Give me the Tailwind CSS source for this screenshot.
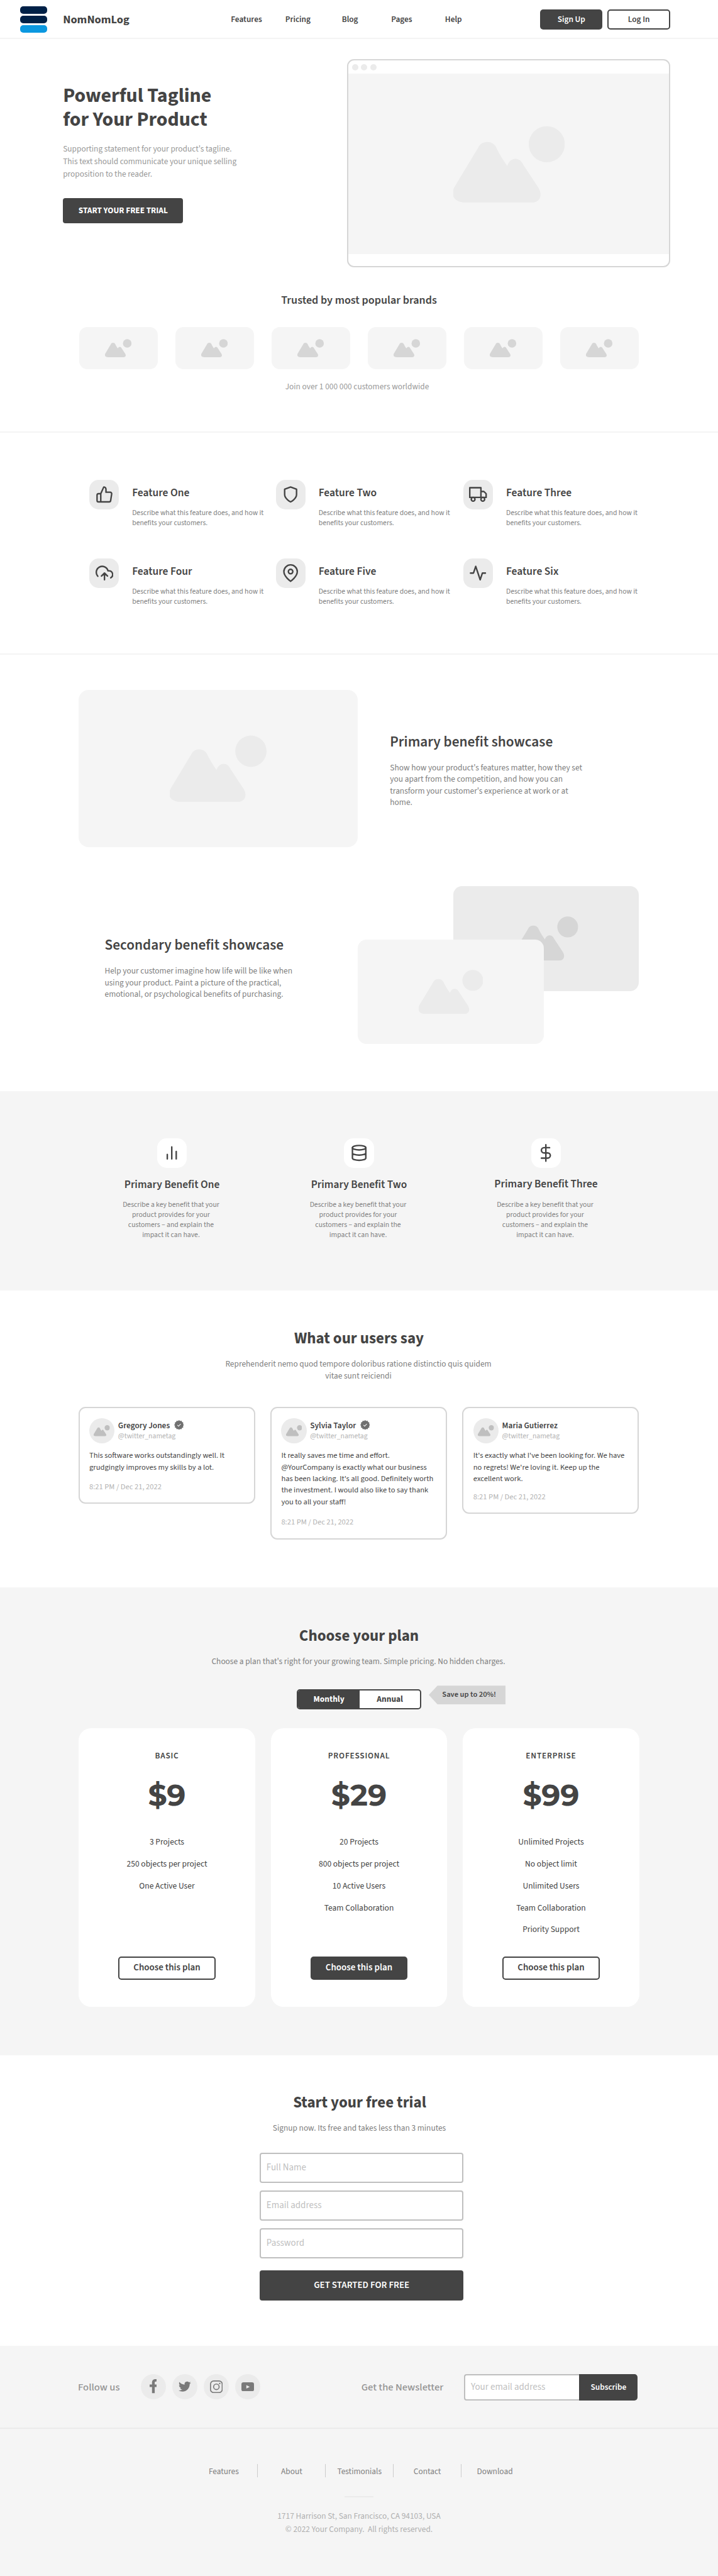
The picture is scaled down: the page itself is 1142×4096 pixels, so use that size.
<!DOCTYPE html>
<html lang="en">
<head>
<meta charset="utf-8">
<title>NomNomLog</title>
<script src="https://cdn.jsdelivr.net/npm/@tailwindcss/browser@4"></script>
</head>
<body class="w-[1142px] bg-white font-['Source_Sans_3','Noto_Sans_CJK_SC',sans-serif] text-[13.36px] leading-[20px] text-[#444]">

<svg class="hidden">
  <symbol id="pic" viewBox="0 0 212 146"><g fill="currentColor"><circle cx="177.7" cy="35" r="34.3"/><path d="M47 42C53 27 76 27 82 42C90 58 96 67 102.5 76C108 59 126 58 133 74L162 118C171 134 163 146 148 146H25C2 146-8 132 3.5 114Z"/></g></symbol>
  <symbol id="badge" viewBox="0 0 24 24"><path fill="#707070" d="M12 0l2.6 2.2 3.4-.6 1.2 3.200 3.200 1.200-.6 3.400L24 12l-2.200 2.600.6 3.400-3.200 1.200-1.200 3.200-3.400-.6L12 24l-2.600-2.200-3.400.6-1.200-3.200-3.200-1.200.6-3.400L0 12l2.200-2.600-.6-3.400 3.200-1.200L6 1.600l3.400.6z"/><path d="M8 12.300l2.700 2.700L16 9.300" fill="none" stroke="#fff" stroke-width="1.600"/></symbol>
</svg>

<header class="flex h-[62px] border-b-2 border-[#f4f4f4]">
  <div class="ml-[32px] mt-[10px] flex w-[43px] flex-col gap-[3.3px]">
    <div class="h-[11.7px] rounded-[5px] bg-[#002147]"></div>
    <div class="h-[11.7px] rounded-[5px] bg-[#002147]"></div>
    <div class="h-[11.7px] rounded-[5px] bg-[#0b98e0]"></div>
  </div>
  <div class="ml-[25.2px] mt-[18.500px] w-[267px] text-[18.400px] font-bold leading-[24px]">NomNomLog</div>
  <nav class="mt-[20.600px] flex font-semibold">
    <a class="w-[86.500px]">Features</a><a class="w-[90px]">Pricing</a><a class="w-[78.500px]">Blog</a><a class="w-[85.600px]">Pages</a><a class="w-[151.400px]">Help</a>
  </nav>
  <div class="mt-[15px] flex gap-[8px] text-center font-semibold">
    <div class="h-[31.700px] w-[99.300px] rounded-[5px] bg-[#444] leading-[31.700px] text-white">Sign Up</div>
    <div class="h-[31.700px] w-[99.300px] rounded-[5px] border-2 border-[#444] leading-[27.700px]">Log In</div>
  </div>
</header>

<section class="h-[626px] border-b-2 border-[#f4f4f4]">
  <div class="flex pl-[100.200px] pt-[32.400px]">
    <div class="w-[451.900px] pt-[39.700px]">
      <h1 class="text-[31.900px] font-bold leading-[37.600px]">Powerful Tagline<br>for Your Product</h1>
      <p class="mt-[17.300px] leading-[20.040px] text-[#999]">Supporting statement for your product's tagline.<br>This text should communicate your unique selling<br>proposition to the reader.</p>
      <div class="mt-[28px] h-[40.700px] w-[191.300px] rounded-[4px] bg-[#444] text-center font-bold leading-[40.700px] text-white">START YOUR FREE TRIAL</div>
    </div>
    <div class="h-[330.400px] w-[514.300px] overflow-hidden rounded-[11px] border-2 border-[#d6d6d6]">
      <div class="flex h-[21.100px] items-center gap-[4.200px] pl-[6.200px]">
        <span class="size-[10px] rounded-full bg-[#ebebeb]"></span><span class="size-[10px] rounded-full bg-[#ebebeb]"></span><span class="size-[10px] rounded-full bg-[#ebebeb]"></span>
      </div>
      <div class="flex h-[287px] items-center justify-center bg-[#f5f5f5] text-[#ebebeb]"><svg class="h-[122.300px] w-[177.400px]"><use href="#pic"/></svg></div>
    </div>
  </div>
  <h2 class="mt-[40.700px] text-center text-[18.150px] font-semibold leading-[24px]">Trusted by most popular brands</h2>
  <div class="mx-auto mt-[30.200px] flex w-[890.600px] justify-between text-[#d6d6d6]">
    <div class="flex h-[67.100px] w-[125.300px] items-center justify-center rounded-[13px] bg-[#f5f5f5]"><svg class="h-[29px] w-[42.200px]"><use href="#pic"/></svg></div>
    <div class="flex h-[67.100px] w-[125.300px] items-center justify-center rounded-[13px] bg-[#f5f5f5]"><svg class="h-[29px] w-[42.200px]"><use href="#pic"/></svg></div>
    <div class="flex h-[67.100px] w-[125.300px] items-center justify-center rounded-[13px] bg-[#f5f5f5]"><svg class="h-[29px] w-[42.200px]"><use href="#pic"/></svg></div>
    <div class="flex h-[67.100px] w-[125.300px] items-center justify-center rounded-[13px] bg-[#f5f5f5]"><svg class="h-[29px] w-[42.200px]"><use href="#pic"/></svg></div>
    <div class="flex h-[67.100px] w-[125.300px] items-center justify-center rounded-[13px] bg-[#f5f5f5]"><svg class="h-[29px] w-[42.200px]"><use href="#pic"/></svg></div>
    <div class="flex h-[67.100px] w-[125.300px] items-center justify-center rounded-[13px] bg-[#f5f5f5]"><svg class="h-[29px] w-[42.200px]"><use href="#pic"/></svg></div>
  </div>
  <p class="mt-[17.900px] pr-[6px] text-center text-[#999]">Join over 1 000 000 customers worldwide</p>
</section>

<section class="grid h-[353px] grid-cols-[296.500px_298.300px_auto] content-start border-b-2 border-[#f4f4f4] pl-[142.200px] pt-[74.600px]">
  <div class="flex h-[125.200px] gap-[20.800px]">
    <div class="flex size-[47.200px] items-center justify-center rounded-[15px] bg-[#ebebeb]"><svg class="size-[28.400px]" viewBox="0 0 24 24" fill="none" stroke="#444" stroke-width="2" stroke-linecap="round" stroke-linejoin="round"><path d="M14 9V5a3 3 0 0 0-3-3l-4 9v11h11.280a2 2 0 0 0 2-1.700l1.380-9a2 2 0 0 0-2-2.300zM7 22H4a2 2 0 0 1-2-2v-7a2 2 0 0 1 2-2h3"/></svg></div>
    <div class="mt-[9.100px] whitespace-nowrap"><h3 class="text-[17.500px] font-semibold leading-[24px]">Feature One</h3><p class="mt-[12.200px] text-[11.690px] leading-[15.900px] text-[#808080]">Describe what this feature does, and how it<br>benefits your customers.</p></div>
  </div>
  <div class="flex h-[125.200px] gap-[20.800px]">
    <div class="flex size-[47.200px] items-center justify-center rounded-[15px] bg-[#ebebeb]"><svg class="size-[28.400px]" viewBox="0 0 24 24" fill="none" stroke="#444" stroke-width="2" stroke-linecap="round" stroke-linejoin="round"><path d="M12 22s8-4 8-10V5l-8-3-8 3v7c0 6 8 10 8 10z"/></svg></div>
    <div class="mt-[9.100px] whitespace-nowrap"><h3 class="text-[17.500px] font-semibold leading-[24px]">Feature Two</h3><p class="mt-[12.200px] text-[11.690px] leading-[15.900px] text-[#808080]">Describe what this feature does, and how it<br>benefits your customers.</p></div>
  </div>
  <div class="flex h-[125.200px] gap-[20.800px]">
    <div class="flex size-[47.200px] items-center justify-center rounded-[15px] bg-[#ebebeb]"><svg class="size-[28.400px]" viewBox="0 0 24 24" fill="none" stroke="#444" stroke-width="2" stroke-linecap="round" stroke-linejoin="round"><path d="M1 3h15v13H1zM16 8h4l3 3v5h-7z"/><circle cx="5.500" cy="18.500" r="2.500"/><circle cx="18.500" cy="18.500" r="2.500"/></svg></div>
    <div class="mt-[9.100px] whitespace-nowrap"><h3 class="text-[17.500px] font-semibold leading-[24px]">Feature Three</h3><p class="mt-[12.200px] text-[11.690px] leading-[15.900px] text-[#808080]">Describe what this feature does, and how it<br>benefits your customers.</p></div>
  </div>
  <div class="flex h-[125.200px] gap-[20.800px]">
    <div class="flex size-[47.200px] items-center justify-center rounded-[15px] bg-[#ebebeb]"><svg class="size-[28.400px]" viewBox="0 0 24 24" fill="none" stroke="#444" stroke-width="2" stroke-linecap="round" stroke-linejoin="round"><path d="M16 16l-4-4-4 4M12 12v9M20.390 18.390A5 5 0 0 0 18 9h-1.260A8 8 0 1 0 3 16.300"/></svg></div>
    <div class="mt-[9.100px] whitespace-nowrap"><h3 class="text-[17.500px] font-semibold leading-[24px]">Feature Four</h3><p class="mt-[12.200px] text-[11.690px] leading-[15.900px] text-[#808080]">Describe what this feature does, and how it<br>benefits your customers.</p></div>
  </div>
  <div class="flex h-[125.200px] gap-[20.800px]">
    <div class="flex size-[47.200px] items-center justify-center rounded-[15px] bg-[#ebebeb]"><svg class="size-[28.400px]" viewBox="0 0 24 24" fill="none" stroke="#444" stroke-width="2" stroke-linecap="round" stroke-linejoin="round"><path d="M21 10c0 7-9 13-9 13s-9-6-9-13a9 9 0 0 1 18 0z"/><circle cx="12" cy="10" r="3"/></svg></div>
    <div class="mt-[9.100px] whitespace-nowrap"><h3 class="text-[17.500px] font-semibold leading-[24px]">Feature Five</h3><p class="mt-[12.200px] text-[11.690px] leading-[15.900px] text-[#808080]">Describe what this feature does, and how it<br>benefits your customers.</p></div>
  </div>
  <div class="flex h-[125.200px] gap-[20.800px]">
    <div class="flex size-[47.200px] items-center justify-center rounded-[15px] bg-[#ebebeb]"><svg class="size-[28.400px]" viewBox="0 0 24 24" fill="none" stroke="#444" stroke-width="2" stroke-linecap="round" stroke-linejoin="round"><path d="M22 12h-4l-3 9L9 3l-3 9H2"/></svg></div>
    <div class="mt-[9.100px] whitespace-nowrap"><h3 class="text-[17.500px] font-semibold leading-[24px]">Feature Six</h3><p class="mt-[12.200px] text-[11.690px] leading-[15.900px] text-[#808080]">Describe what this feature does, and how it<br>benefits your customers.</p></div>
  </div>
</section>

<section class="h-[694.200px] pt-[56px]">
  <div class="flex pl-[125.300px]">
    <div class="flex h-[249.700px] w-[444px] items-center justify-center rounded-[16px] bg-[#f5f5f5] text-[#ebebeb]"><svg class="h-[106.200px] w-[154px]"><use href="#pic"/></svg></div>
    <div class="ml-[51px] mt-[67.700px]">
      <h2 class="text-[23.300px] font-semibold leading-[30px]">Primary benefit showcase</h2>
      <p class="mt-[17.200px] leading-[18.400px] text-[#808080]">Show how your product's features matter, how they set<br>you apart from the competition, and how you can<br>transform your customer's experience at work or at<br>home.</p>
    </div>
  </div>
  <div class="mt-[62.700px] flex pl-[166.500px]">
    <div class="w-[402.600px] pt-[78.800px]">
      <h2 class="text-[23.300px] font-semibold leading-[30px]">Secondary benefit showcase</h2>
      <p class="mt-[17.300px] leading-[18.400px] text-[#808080]">Help your customer imagine how life will be like when<br>using your product. Paint a picture of the practical,<br>emotional, or psychological benefits of purchasing.</p>
    </div>
    <div class="relative h-[250.900px] w-[447.200px]">
      <div class="absolute right-0 top-0 flex h-[166.300px] w-[295.600px] items-center justify-center rounded-[14px] bg-[#ebebeb] text-[#d6d6d6]"><svg class="h-[70.600px] w-[102.600px]"><use href="#pic"/></svg></div>
      <div class="absolute bottom-0 left-0 flex h-[166.300px] w-[296px] items-center justify-center rounded-[14px] bg-[#f5f5f5] text-[#ebebeb]"><svg class="h-[70.600px] w-[102.600px]"><use href="#pic"/></svg></div>
    </div>
  </div>
</section>

<section class="flex h-[317.300px] justify-center bg-[#f5f5f5] pt-[74.800px] text-center">
  <div class="flex w-[297.500px] flex-col items-center">
    <div class="flex size-[47.400px] items-center justify-center rounded-[15px] bg-white"><svg class="size-[28.400px]" viewBox="0 0 24 24" fill="none" stroke="#444" stroke-width="2" stroke-linecap="round"><path d="M18 20V10M12 20V4M6 20v-6"/></svg></div>
    <h3 class="mt-[14.800px] text-[17.400px] font-semibold leading-[24px]">Primary Benefit One</h3>
    <p class="mt-[11.900px] pr-[3px] text-[11.690px] leading-[15.850px] text-[#808080]">Describe a key benefit that your<br>product provides for your<br>customers – and explain the<br>impact it can have.</p>
  </div>
  <div class="flex w-[297.500px] flex-col items-center">
    <div class="flex size-[47.400px] items-center justify-center rounded-[15px] bg-white"><svg class="size-[28.400px]" viewBox="0 0 24 24" fill="none" stroke="#444" stroke-width="2" stroke-linecap="round"><ellipse cx="12" cy="5" rx="9" ry="3"/><path d="M21 12c0 1.660-4 3-9 3s-9-1.340-9-3M3 5v14c0 1.660 4 3 9 3s9-1.340 9-3V5"/></svg></div>
    <h3 class="mt-[14.800px] text-[17.400px] font-semibold leading-[24px]">Primary Benefit Two</h3>
    <p class="mt-[11.900px] pr-[3px] text-[11.690px] leading-[15.850px] text-[#808080]">Describe a key benefit that your<br>product provides for your<br>customers – and explain the<br>impact it can have.</p>
  </div>
  <div class="flex w-[297.500px] flex-col items-center">
    <div class="flex size-[47.400px] items-center justify-center rounded-[15px] bg-white"><svg class="size-[28.400px]" viewBox="0 0 24 24" fill="none" stroke="#444" stroke-width="2" stroke-linecap="round"><path d="M12 1v22M17 5H9.500a3.500 3.500 0 0 0 0 7h5a3.500 3.500 0 0 1 0 7H6"/></svg></div>
    <h3 class="mt-[13.800px] text-[17.400px] font-semibold leading-[24px]">Primary Benefit Three</h3>
    <p class="mt-[12.900px] pr-[3px] text-[11.690px] leading-[15.850px] text-[#808080]">Describe a key benefit that your<br>product provides for your<br>customers – and explain the<br>impact it can have.</p>
  </div>
</section>

<section class="h-[471.400px] pt-[59.700px]">
  <h2 class="text-center text-[25px] font-bold leading-[32px]">What our users say</h2>
  <p class="mt-[16px] pr-[2px] text-center leading-[18.400px] text-[#808080]">Reprehenderit nemo quod tempore doloribus ratione distinctio quis quidem<br>vitae sunt reiciendi</p>
  <div class="mt-[40.400px] flex items-start gap-[24.400px] whitespace-nowrap pl-[124.700px] text-[12.530px] leading-[18.400px]">
    <article class="h-[154px] w-[281px] rounded-[11px] border-2 border-[#d6d6d6] pl-[15.300px] pt-[15.700px]">
      <div class="flex gap-[5.500px]">
        <div class="flex size-[40.300px] items-center justify-center rounded-full bg-[#ebebeb] text-[#bfbfbf]"><svg class="h-[17.700px] w-[25.700px]"><use href="#pic"/></svg></div>
        <div class="mt-[3.300px]">
          <div class="flex h-[18px] items-start gap-[6.500px] text-[13.360px] font-semibold leading-[18px]">Gregory Jones <svg class="size-[15.600px]"><use href="#badge"/></svg></div>
          <div class="text-[11.690px] leading-[16.600px] text-[#b3b3b3]">@twitter_nametag</div>
        </div>
      </div>
      <p class="mt-[9.900px]">This software works outstandingly well. It<br>grudgingly improves my skills by a lot.</p>
      <p class="mt-[12.500px] text-[#b3b3b3]">8:21 PM / Dec 21, 2022</p>
    </article>
    <article class="h-[210.800px] w-[281px] rounded-[11px] border-2 border-[#d6d6d6] pl-[15.300px] pt-[15.700px]">
      <div class="flex gap-[5.500px]">
        <div class="flex size-[40.300px] items-center justify-center rounded-full bg-[#ebebeb] text-[#bfbfbf]"><svg class="h-[17.700px] w-[25.700px]"><use href="#pic"/></svg></div>
        <div class="mt-[3.300px]">
          <div class="flex h-[18px] items-start gap-[6.500px] text-[13.360px] font-semibold leading-[18px]">Sylvia Taylor <svg class="size-[15.600px]"><use href="#badge"/></svg></div>
          <div class="text-[11.690px] leading-[16.600px] text-[#b3b3b3]">@twitter_nametag</div>
        </div>
      </div>
      <p class="mt-[9.900px]">It really saves me time and effort.<br>@YourCompany is exactly what our business<br>has been lacking. It's all good. Definitely worth<br>the investment. I would also like to say thank<br>you to all your staff!</p>
      <p class="mt-[13.400px] text-[#b3b3b3]">8:21 PM / Dec 21, 2022</p>
    </article>
    <article class="h-[169.900px] w-[281px] rounded-[11px] border-2 border-[#d6d6d6] pl-[15.300px] pt-[15.700px]">
      <div class="flex gap-[5.500px]">
        <div class="flex size-[40.300px] items-center justify-center rounded-full bg-[#ebebeb] text-[#bfbfbf]"><svg class="h-[17.700px] w-[25.700px]"><use href="#pic"/></svg></div>
        <div class="mt-[3.300px]">
          <div class="h-[18px] text-[13.360px] font-semibold leading-[18px]">Maria Gutierrez</div>
          <div class="text-[11.690px] leading-[16.600px] text-[#b3b3b3]">@twitter_nametag</div>
        </div>
      </div>
      <p class="mt-[9.900px]">It's exactly what I've been looking for. We have<br>no regrets! We're loving it. Keep up the<br>excellent work.</p>
      <p class="mt-[11px] text-[#b3b3b3]">8:21 PM / Dec 21, 2022</p>
    </article>
  </div>
</section>

<section class="h-[743.700px] bg-[#f5f5f5] pt-[61px]">
  <h2 class="text-center text-[25px] font-bold leading-[32px]">Choose your plan</h2>
  <p class="mt-[14.700px] pr-[2px] text-center text-[#808080]">Choose a plan that's right for your growing team. Simple pricing. No hidden charges.</p>
  <div class="mt-[28.700px] flex h-[37.400px] gap-[12px] pl-[472px] text-center">
    <div class="mt-[5.700px] flex h-[31.700px] w-[198px] overflow-hidden rounded-[5px] border-2 border-[#444] bg-white text-[13.450px] font-bold leading-[28.200px]">
      <div class="w-[98.300px] bg-[#444] text-white">Monthly</div><div class="flex-1">Annual</div>
    </div>
    <div class="h-[29.700px] w-[122.400px] bg-[#d6d6d6] pl-[6px] text-[12.500px] font-semibold leading-[29.200px] [clip-path:polygon(0_50%,13.800px_0,100%_0,100%_100%,13.800px_100%)]">Save up to 20%!</div>
  </div>
  <div class="mt-[30.700px] flex gap-[25.100px] pl-[125.300px] text-center">
    <div class="flex h-[443px] w-[280.400px] flex-col items-center rounded-[20px] bg-white pb-[43.600px] pt-[33.500px]">
      <div class="font-semibold tracking-[0.800px]">BASIC</div>
      <div class="mt-[23.900px] font-[Montserrat] text-[47.400px] font-bold leading-[56px]">$9</div>
      <div class="mt-[30.700px] text-[13.500px] leading-[34.700px]">3 Projects<br>250 objects per project<br>One Active User</div>
      <div class="mt-auto h-[36.600px] w-[154.500px] rounded-[5px] border-2 border-[#444] text-[15px] font-semibold leading-[32px]">Choose this plan</div>
    </div>
    <div class="flex h-[443px] w-[280.400px] flex-col items-center rounded-[20px] bg-white pb-[43.600px] pt-[33.500px]">
      <div class="font-semibold tracking-[0.800px]">PROFESSIONAL</div>
      <div class="mt-[23.900px] font-[Montserrat] text-[47.400px] font-bold leading-[56px]">$29</div>
      <div class="mt-[30.700px] text-[13.500px] leading-[34.700px]">20 Projects<br>800 objects per project<br>10 Active Users<br>Team Collaboration</div>
      <div class="mt-auto h-[36.600px] w-[154.500px] rounded-[5px] border-2 border-[#444] bg-[#444] text-[15px] font-semibold leading-[32px] text-white">Choose this plan</div>
    </div>
    <div class="flex h-[443px] w-[280.400px] flex-col items-center rounded-[20px] bg-white pb-[43.600px] pt-[33.500px]">
      <div class="font-semibold tracking-[0.800px]">ENTERPRISE</div>
      <div class="mt-[23.900px] font-[Montserrat] text-[47.400px] font-bold leading-[56px]">$99</div>
      <div class="mt-[30.700px] text-[13.500px] leading-[34.700px]">Unlimited Projects<br>No object limit<br>Unlimited Users<br>Team Collaboration<br>Priority Support</div>
      <div class="mt-auto h-[36.600px] w-[154.500px] rounded-[5px] border-2 border-[#444] text-[15px] font-semibold leading-[32px]">Choose this plan</div>
    </div>
  </div>
</section>

<section class="h-[462.500px] pt-[59.900px]">
  <h2 class="pl-[2px] text-center text-[25px] font-bold leading-[32px]">Start your free trial</h2>
  <p class="mt-[14.900px] pl-[1px] text-center text-[#808080]">Signup now. Its free and takes less than 3 minutes</p>
  <form class="ml-[413.300px] mt-[28.800px] flex w-[323.700px] flex-col text-[15px]">
    <div class="h-[48px] rounded-[4px] border-2 border-[#bfbfbf] pl-[8.500px] leading-[43px] text-[#bfbfbf]">Full Name</div>
    <div class="mt-[11.900px] h-[48px] rounded-[4px] border-2 border-[#bfbfbf] pl-[8.500px] leading-[43px] text-[#bfbfbf]">Email address</div>
    <div class="mt-[11.900px] h-[48px] rounded-[4px] border-2 border-[#bfbfbf] pl-[8.500px] leading-[43px] text-[#bfbfbf]">Password</div>
    <div class="mt-[18.800px] h-[48.100px] rounded-[4px] bg-[#444] text-center font-semibold leading-[48px] text-white">GET STARTED FOR FREE</div>
  </form>
</section>

<footer class="h-[365.900px] bg-[#f5f5f5]">
  <div class="flex h-[131.500px] border-b-2 border-[#ebebeb] pl-[124px] pt-[44.900px]">
    <div class="mt-[9.400px] w-[99.600px] text-[16.600px] font-medium leading-[24px] text-[#949494]">Follow us</div>
    <div class="flex gap-[10.100px] text-[#7a7a7a]">
      <div class="flex size-[40px] items-center justify-center rounded-full bg-[#ebebeb]"><svg class="-mt-[1px] h-[22.200px] w-[11.700px]" viewBox="0 0 14 26.600" fill="currentColor"><path d="M4.500 26.600V15H0V10.300H4.500V7C4.500 2.500 7 0 11 0H14V4.500H12C10 4.500 9.700 5.500 9.700 7V10.300H14L13.400 15H9.700V26.600Z"/></svg></div>
      <div class="flex size-[40px] items-center justify-center rounded-full bg-[#ebebeb]"><svg class="size-[19.700px]" viewBox="0 0 24 24" fill="currentColor"><path d="M23.953 4.570a10 10 0 01-2.825.775 4.958 4.958 0 002.163-2.723c-.951.555-2.005.959-3.127 1.184a4.920 4.920 0 00-8.384 4.482C7.690 8.095 4.067 6.130 1.640 3.162a4.822 4.822 0 00-.666 2.475c0 1.710.870 3.213 2.188 4.096a4.904 4.904 0 01-2.228-.616v.060a4.923 4.923 0 003.946 4.827 4.996 4.996 0 01-2.212.085 4.936 4.936 0 004.604 3.417 9.867 9.867 0 01-6.102 2.105c-.390 0-.779-.023-1.170-.067a13.995 13.995 0 007.557 2.209c9.053 0 13.998-7.496 13.998-13.985 0-.210 0-.420-.015-.630A9.935 9.935 0 0024 4.590z"/></svg></div>
      <div class="flex size-[40px] items-center justify-center rounded-full bg-[#ebebeb]"><svg class="size-[20.300px]" viewBox="0 0 24 24" fill="none" stroke="currentColor" stroke-width="2"><rect x="1" y="1" width="22" height="22" rx="6"/><circle cx="12" cy="12" r="5.200"/><circle cx="18.300" cy="5.700" r="1.400" fill="currentColor" stroke="none"/></svg></div>
      <div class="flex size-[40px] items-center justify-center rounded-full bg-[#ebebeb]"><svg class="h-[14.500px] w-[20px]" viewBox="0 0 24 17.400"><rect width="24" height="17.400" rx="4" fill="currentColor"/><path d="M9.400 5.300l6.600 3.300-6.600 3.300z" fill="#ebebeb"/></svg></div>
    </div>
    <div class="ml-[160.900px] mt-[9.400px] w-[163.700px] text-[16.600px] font-medium leading-[24px] text-[#949494]">Get the Newsletter</div>
    <div class="flex h-[41.700px]">
      <div class="w-[183px] rounded-l-[4px] border-y-2 border-l-2 border-[#bfbfbf] bg-white pl-[8.500px] text-[15px] leading-[37.200px] text-[#bfbfbf]">Your email address</div>
      <div class="w-[93px] rounded-r-[5px] bg-[#444] text-center font-semibold leading-[42.500px] text-white">Subscribe</div>
    </div>
  </div>
  <div class="ml-[302.400px] mt-[56.600px] flex h-[20.800px] text-center leading-[23px] text-[#808080]">
    <a class="w-[108px] border-r border-[#ccc]">Features</a><a class="w-[108px] border-r border-[#ccc]">About</a><a class="w-[107.700px] border-r border-[#ccc]">Testimonials</a><a class="w-[108px] border-r border-[#ccc]">Contact</a><a class="w-[106px]">Download</a>
  </div>
  <div class="mx-auto mt-[29.600px] h-[2px] w-[46.500px] bg-[#ebebeb]"></div>
  <p class="mt-[20.800px] text-center leading-[20.900px] text-[#b0b0b0]">1717 Harrison St, San Francisco, CA 94103, USA<br>© 2022 Your Company.&nbsp; All rights reserved.</p>
</footer>
</body>
</html>
